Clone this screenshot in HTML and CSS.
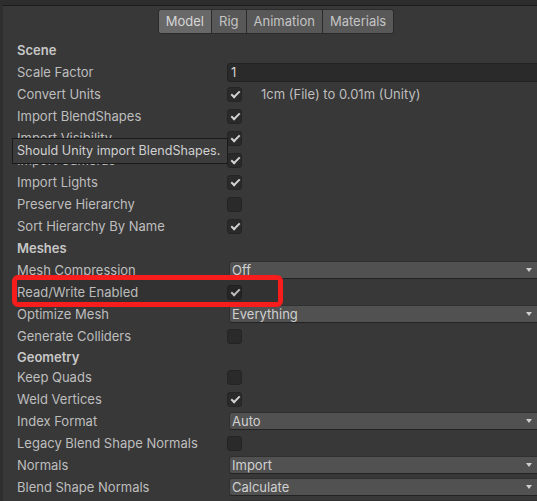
FILE: index.html
```html
<!DOCTYPE html>
<html lang="en">
<head>
  <meta charset="UTF-8">
  <title>Model Import Settings</title>
  <link rel="stylesheet" href="styles.css">
</head>
<body>
  <div class="inspector">
    <div class="topStrip"></div>

    <div class="tabs">
      <span class="tab selected">Model</span>
      <span class="tab">Rig</span>
      <span class="tab">Animation</span>
      <span class="tab">Materials</span>
    </div>

    <div class="rows">
      <div class="row section"><span class="label">Scene</span></div>
      <div class="row"><span class="label">Scale Factor</span><span class="field">1</span></div>
      <div class="row">
        <span class="label">Convert Units</span>
        <span class="value"><span class="checkbox on"></span><span class="note">1cm (File) to 0.01m (Unity)</span></span>
      </div>
      <div class="row"><span class="label">Import BlendShapes</span><span class="value"><span class="checkbox on"></span></span></div>
      <div class="row"><span class="label">Import Visibility</span><span class="value"><span class="checkbox on"></span></span></div>
      <div class="row"><span class="label">Import Cameras</span><span class="value"><span class="checkbox on"></span></span></div>
      <div class="row"><span class="label">Import Lights</span><span class="value"><span class="checkbox on"></span></span></div>
      <div class="row"><span class="label">Preserve Hierarchy</span><span class="value"><span class="checkbox"></span></span></div>
      <div class="row"><span class="label">Sort Hierarchy By Name</span><span class="value"><span class="checkbox on"></span></span></div>

      <div class="row section"><span class="label">Meshes</span></div>
      <div class="row"><span class="label">Mesh Compression</span><span class="dropdown">Off</span></div>
      <div class="row"><span class="label bright">Read/Write Enabled</span><span class="value"><span class="checkbox on"></span></span></div>
      <div class="row"><span class="label">Optimize Mesh</span><span class="dropdown">Everything</span></div>
      <div class="row"><span class="label">Generate Colliders</span><span class="value"><span class="checkbox"></span></span></div>

      <div class="row section short"><span class="label">Geometry</span></div>
      <div class="row"><span class="label">Keep Quads</span><span class="value"><span class="checkbox"></span></span></div>
      <div class="row"><span class="label">Weld Vertices</span><span class="value"><span class="checkbox on"></span></span></div>
      <div class="row"><span class="label">Index Format</span><span class="dropdown">Auto</span></div>
      <div class="row"><span class="label">Legacy Blend Shape Normals</span><span class="value"><span class="checkbox"></span></span></div>
      <div class="row"><span class="label">Normals</span><span class="dropdown">Import</span></div>
      <div class="row"><span class="label">Blend Shape Normals</span><span class="dropdown">Calculate</span></div>
      <div class="row"><span class="label">Tangents</span><span class="dropdown">Calculate Mikktspace</span></div>
    </div>

    <div class="tooltip">Should Unity import BlendShapes.</div>
    <div class="highlight"></div>
  </div>
</body>
</html>
```

FILE: styles.css
```css
body {
  margin: 0;
  padding: 0;
  background: #383838;
  overflow: hidden;
  font-family: 'Inter', 'Noto Sans', sans-serif;
  font-size: 13px;
  color: #bebebe;
}

.inspector {
  position: relative;
  height: 501px;
  border-left: 3px solid #2e2e2e;
  overflow: hidden;
}

.topStrip {
  height: 5px;
  background: #2d2d2d;
  border-bottom: 1px solid #1c1c1c;
}

/* tab strip */

.tabs {
  display: flex;
  justify-content: center;
  padding: 3px 0 0 12px;
  margin-bottom: 5px;
}

.tab {
  height: 23px;
  line-height: 23px;
  padding: 0 7px;
  background: #585858;
  border: 1px solid #2b2b2b;
  border-left: none;
  color: #c4c4c4;
}

.tab:first-child {
  border-left: 1px solid #2b2b2b;
  border-radius: 3px 0 0 3px;
}

.tab:last-child {
  border-radius: 0 3px 3px 0;
}

.tab.selected {
  background: #686868;
  color: #d6d6d6;
}

/* property rows */

.row {
  display: grid;
  grid-template-columns: 224px 1fr;
  align-items: center;
  height: 22px;
}

.row.short {
  height: 19px;
}

.label {
  padding-left: 14px;
  white-space: nowrap;
}

.label.bright {
  color: #d0d0d0;
}

.section .label {
  font-weight: 600;
  color: #c8c8c8;
}

.value {
  display: flex;
  align-items: center;
}

.checkbox {
  position: relative;
  width: 13px;
  height: 13px;
  background: #2a2a2a;
  border: 1px solid #242424;
  border-radius: 3px;
}

.checkbox.on::after {
  content: '';
  position: absolute;
  left: 3px;
  top: 3px;
  width: 7px;
  height: 3px;
  border: solid #d2d2d2;
  border-width: 0 0 2px 2px;
  transform: rotate(-45deg);
}

.note {
  margin-left: 19px;
}

.field {
  height: 17px;
  line-height: 17px;
  padding-left: 3px;
  margin-right: -4px;
  background: #2a2a2a;
  border: 1px solid #212121;
  border-radius: 3px;
  color: #d0d0d0;
}

.dropdown {
  position: relative;
  height: 16px;
  line-height: 16px;
  margin-left: 2px;
  margin-right: -4px;
  padding-left: 2px;
  background: #515151;
  border: 1px solid #303030;
  border-bottom-color: #232323;
  border-radius: 3px;
  color: #d0d0d0;
}

.dropdown::after {
  content: '';
  position: absolute;
  right: 8px;
  top: 6px;
  border-left: 3.5px solid transparent;
  border-right: 3.5px solid transparent;
  border-top: 4px solid #cfcfcf;
}

/* hover tooltip and annotation frame drawn over the rows */

.tooltip {
  position: absolute;
  left: 9px;
  top: 138px;
  width: 210px;
  height: 24px;
  line-height: 24px;
  padding-left: 4px;
  background: #3c3c3c;
  border: 1px solid #1a1a1a;
  font-size: 12.6px;
  color: #d0d0d0;
  white-space: nowrap;
}

.highlight {
  position: absolute;
  left: 9px;
  top: 275px;
  width: 261px;
  height: 22px;
  border: 5px solid #f81d1d;
  border-radius: 6px;
  background: rgba(0, 0, 0, 0.1);
}
```
